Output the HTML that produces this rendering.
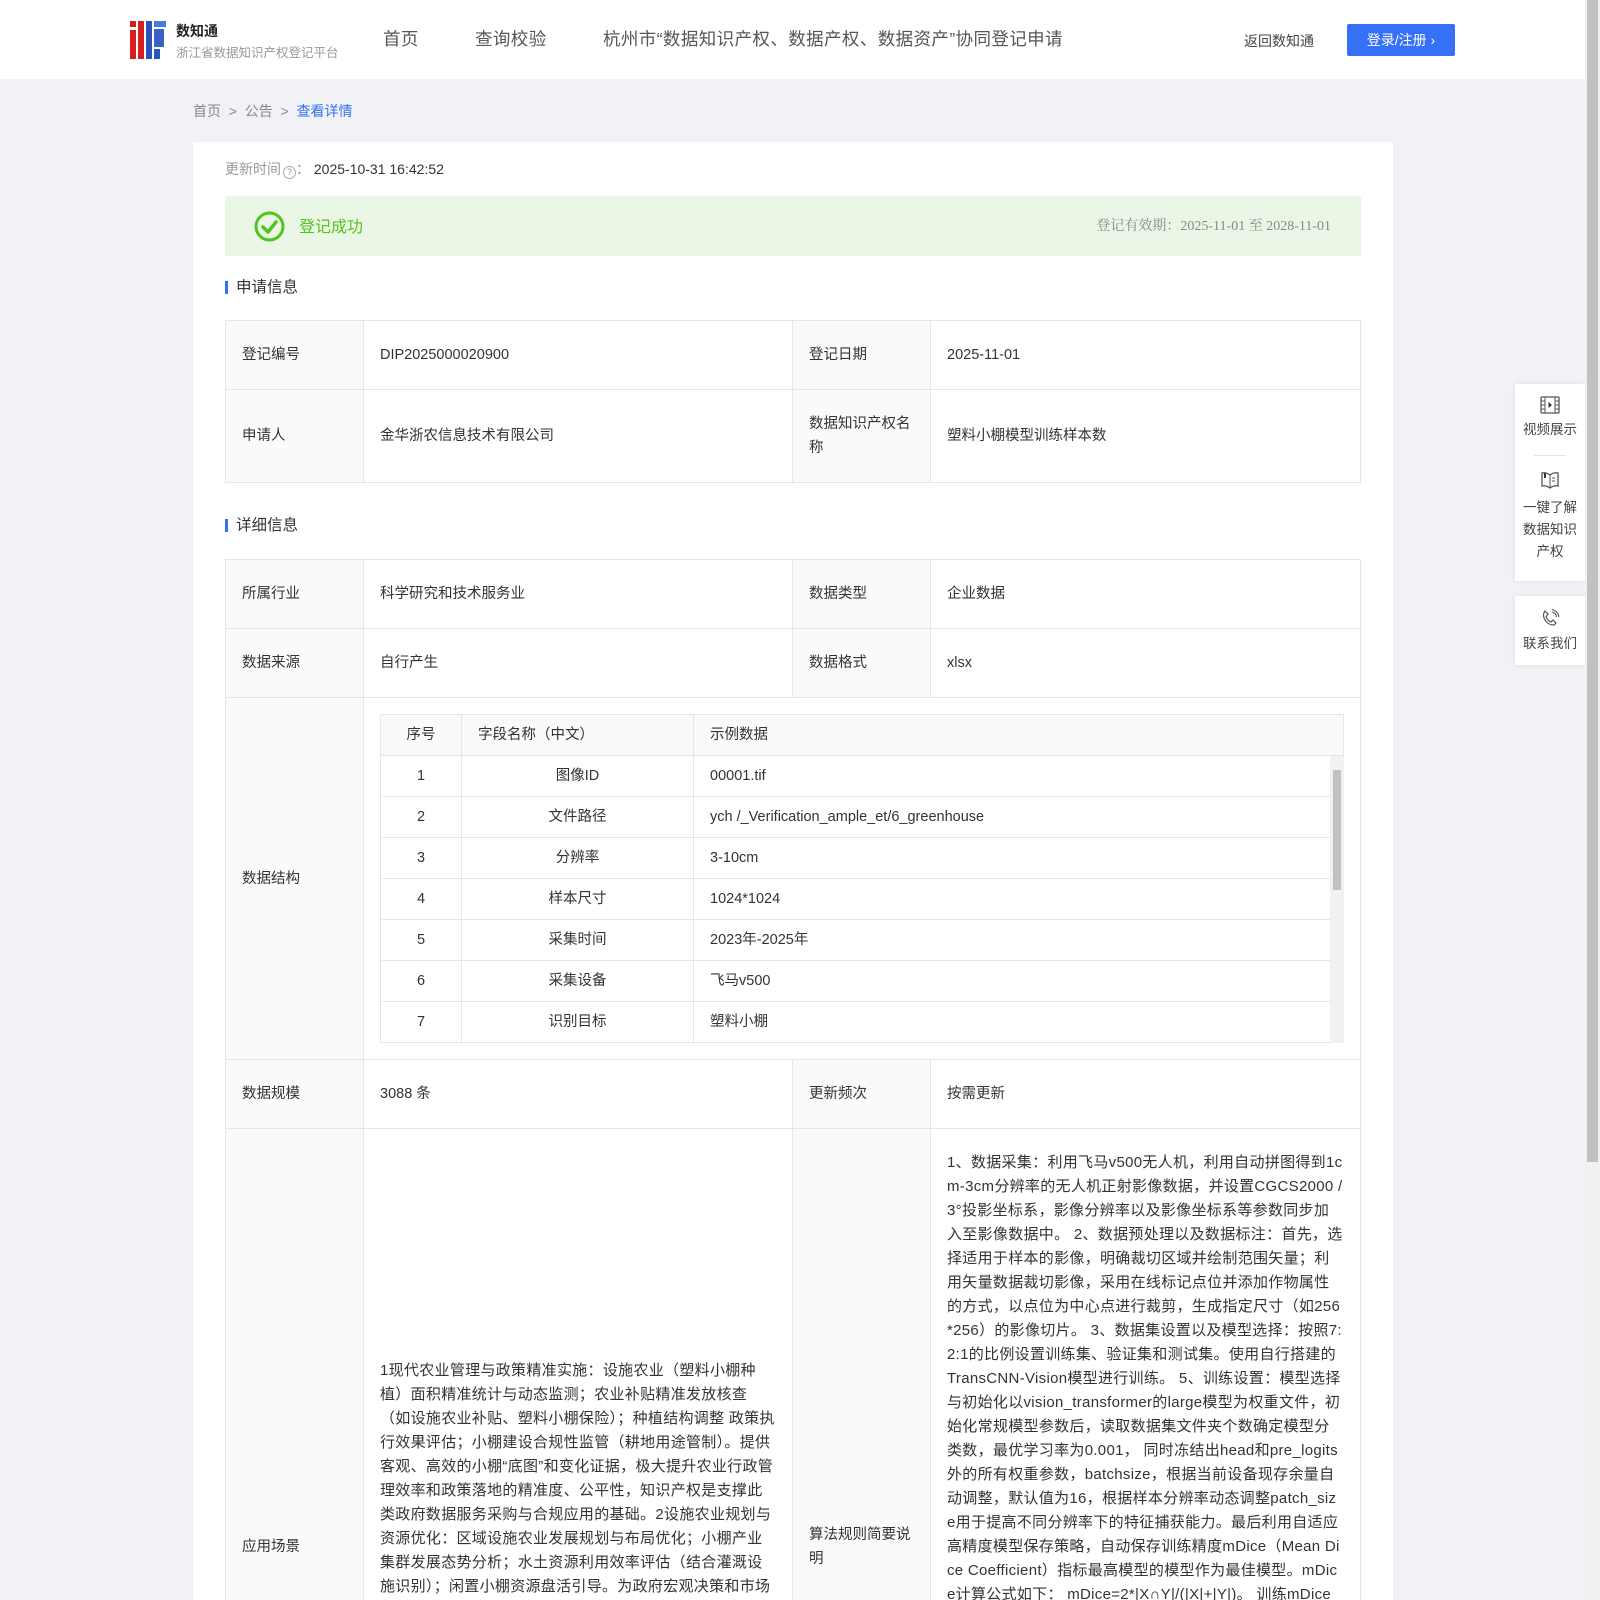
<!DOCTYPE html>
<html><head><meta charset="utf-8">
<style>
*{margin:0;padding:0;box-sizing:border-box}
html,body{width:1600px;height:1600px;overflow:hidden}
body{background:#f0f2f5;font-family:"Liberation Sans","Noto Sans CJK SC",sans-serif;color:#333;font-size:14px;position:relative}
.hdr{position:absolute;left:0;top:0;width:1585px;height:79px;background:#fff}
.logo{position:absolute;left:130px;top:21px}
.t1{position:absolute;left:176px;top:21px;font-size:14px;font-weight:bold;color:#222}
.t2{position:absolute;left:176px;top:42px;font-size:12.5px;color:#999}
.nav{position:absolute;top:26px;font-size:17.5px;color:#555;letter-spacing:0.4px}
.back{position:absolute;left:1244px;top:31px;font-size:14px;color:#444}
.login{position:absolute;left:1347px;top:24px;width:108px;height:32px;background:#3471f5;color:#fff;font-size:14px;line-height:32px;text-align:center;border-radius:2px}
.bc{position:absolute;left:193px;top:101px;font-size:14px;color:#888}
.bc b{font-weight:normal;color:#3471f5}
.card{position:absolute;left:193px;top:142px;width:1200px;height:1500px;background:#fff}
.abs{position:absolute}
.upd{left:32px;top:17px;color:#999;font-size:14px}
.upd span{color:#333}
.ok{left:32px;top:54px;width:1136px;height:60px;background:#ebf7e6}
.ok .tx{position:absolute;left:74px;top:17px;color:#52c41a;font-size:16px}
.ok .dt{position:absolute;right:30px;top:19px;color:#888;font-size:14px;font-family:"Liberation Serif","Noto Serif CJK SC",serif}
.sec{font-size:15.5px;color:#333;padding-left:8px;border-left:3px solid #3471f5;line-height:13px}
table.t{position:absolute;left:32px;width:1136px;border-collapse:collapse;table-layout:fixed}
table.t td{border:1px solid #e6e6e6;padding:0 16px;font-size:14.5px;color:#333;line-height:24px}
table.t td.l{background:#fafafa}
.inner{border-collapse:collapse;width:964px;table-layout:fixed}
.inner td{border:1px solid #e8e8e8;height:41px;font-size:13.5px;color:#555;padding:0 12px;line-height:20px}
.inner tr.h td{background:#fafafa}
table.t td.txt{word-break:break-all;font-size:15px;letter-spacing:0.3px;line-height:24px}
.side{position:absolute;left:1515px;width:70px;background:#fff;box-shadow:0 0 6px rgba(0,0,0,.08);text-align:center;font-size:13.5px;color:#444;line-height:22px}
.sb{position:absolute;left:1585px;top:0;width:15px;height:1600px;background:#f1f1f1}
.sb i{position:absolute;left:2px;top:0;width:11px;height:1162px;background:#c1c1c1}
</style></head><body>
<div class="hdr">
 <svg class="logo" width="36" height="38" viewBox="0 0 36 38">
  <rect x="0" y="0" width="6" height="6" fill="#d81e1e"/>
  <rect x="0" y="9" width="6" height="29" fill="#d81e1e"/>
  <rect x="8" y="0" width="6" height="38" fill="#d81e1e"/>
  <rect x="16" y="0" width="6" height="38" fill="#2a55b8"/>
  <rect x="24" y="0" width="12" height="6" fill="#4a78d6"/>
  <rect x="24" y="8" width="10" height="18" fill="#3a62c4"/>
  <rect x="24" y="28" width="6" height="10" fill="#2a55b8"/>
 </svg>
 <div class="t1">数知通</div>
 <div class="t2">浙江省数据知识产权登记平台</div>
 <div class="nav" style="left:383px">首页</div>
 <div class="nav" style="left:475px">查询校验</div>
 <div class="nav" style="left:603px">杭州市“数据知识产权、数据产权、数据资产”协同登记申请</div>
 <div class="back">返回数知通</div>
 <div class="login">登录/注册 ›</div>
</div>
<div class="bc">首页 &nbsp;&gt;&nbsp; 公告 &nbsp;&gt;&nbsp; <b>查看详情</b></div>
<div class="card">
 <div class="abs upd">更新时间<span style="display:inline-block;width:13px;height:13px;border:1px solid #aaa;border-radius:50%;font-size:9px;line-height:11px;text-align:center;color:#999;vertical-align:-1px;margin-left:2px">?</span>： <span>2025-10-31 16:42:52</span></div>
 <div class="abs ok">
  <svg style="position:absolute;left:29px;top:15px" width="31" height="31" viewBox="0 0 31 31"><circle cx="15.5" cy="15.5" r="13.5" fill="none" stroke="#52c41a" stroke-width="3"/><path d="M9 16 L14 21 L22 11" fill="none" stroke="#52c41a" stroke-width="3.5" stroke-linecap="round" stroke-linejoin="round"/></svg>
  <div class="tx">登记成功</div>
  <div class="dt">登记有效期：2025-11-01 至 2028-11-01</div>
 </div>
 <div class="abs sec" style="left:32px;top:139px">申请信息</div>
 <table class="t" style="top:178px">
  <colgroup><col style="width:138px"><col style="width:429px"><col style="width:138px"><col></colgroup>
  <tr style="height:69px"><td class="l">登记编号</td><td>DIP2025000020900</td><td class="l">登记日期</td><td>2025-11-01</td></tr>
  <tr style="height:93px"><td class="l">申请人</td><td>金华浙农信息技术有限公司</td><td class="l">数据知识产权名称</td><td>塑料小棚模型训练样本数</td></tr>
 </table>
 <div class="abs sec" style="left:32px;top:377px">详细信息</div>
 <table class="t" style="top:417px">
  <colgroup><col style="width:138px"><col style="width:429px"><col style="width:138px"><col></colgroup>
  <tr style="height:69px"><td class="l">所属行业</td><td>科学研究和技术服务业</td><td class="l">数据类型</td><td>企业数据</td></tr>
  <tr style="height:69px"><td class="l">数据来源</td><td>自行产生</td><td class="l">数据格式</td><td>xlsx</td></tr>
  <tr style="height:361px"><td class="l">数据结构</td><td colspan="3" style="padding:16px;vertical-align:top;position:relative">
   <table class="inner">
    <colgroup><col style="width:81px"><col style="width:232px"><col></colgroup>
    <tr class="h"><td style="text-align:center">序号</td><td>字段名称（中文）</td><td>示例数据</td></tr>
    <tr><td style="text-align:center">1</td><td style="text-align:center">图像ID</td><td>00001.tif</td></tr>
    <tr><td style="text-align:center">2</td><td style="text-align:center">文件路径</td><td>ych /_Verification_ample_et/6_greenhouse</td></tr>
    <tr><td style="text-align:center">3</td><td style="text-align:center">分辨率</td><td>3-10cm</td></tr>
    <tr><td style="text-align:center">4</td><td style="text-align:center">样本尺寸</td><td>1024*1024</td></tr>
    <tr><td style="text-align:center">5</td><td style="text-align:center">采集时间</td><td>2023年-2025年</td></tr>
    <tr><td style="text-align:center">6</td><td style="text-align:center">采集设备</td><td>飞马v500</td></tr>
    <tr><td style="text-align:center">7</td><td style="text-align:center">识别目标</td><td>塑料小棚</td></tr>
   </table>
   <div style="position:absolute;left:966px;top:58px;width:14px;height:287px;background:#f1f1f1"><div style="position:absolute;left:3px;top:14px;width:8px;height:120px;background:#c1c1c1"></div></div>
  </td></tr>
  <tr style="height:69px"><td class="l">数据规模</td><td>3088 条</td><td class="l">更新频次</td><td>按需更新</td></tr>
  <tr style="height:840px"><td class="l" style="vertical-align:top;padding-top:406px">应用场景</td><td class="txt" style="vertical-align:top;padding-top:230px">1现代农业管理与政策精准实施：设施农业（塑料小棚种植）面积精准统计与动态监测；农业补贴精准发放核查 （如设施农业补贴、塑料小棚保险）；种植结构调整 政策执行效果评估；小棚建设合规性监管（耕地用途管制）。提供客观、高效的小棚“底图”和变化证据，极大提升农业行政管理效率和政策落地的精准度、公平性，知识产权是支撑此类政府数据服务采购与合规应用的基础。2设施农业规划与资源优化：区域设施农业发展规划与布局优化；小棚产业集群发展态势分析；水土资源利用效率评估（结合灌溉设施识别）；闲置小棚资源盘活引导。为政府宏观决策和市场主体投资提供空间数据支撑，促进设施农业资源高效配置与产业结构优化升级，推动农业现代化发展进程。</td><td class="l" style="vertical-align:top;padding-top:394px">算法规则简要说明</td><td class="txt" style="vertical-align:top;padding-top:22px">1、数据采集：利用飞马v500无人机，利用自动拼图得到1cm-3cm分辨率的无人机正射影像数据，并设置CGCS2000 / 3°投影坐标系，影像分辨率以及影像坐标系等参数同步加入至影像数据中。 2、数据预处理以及数据标注：首先，选择适用于样本的影像，明确裁切区域并绘制范围矢量；利用矢量数据裁切影像，采用在线标记点位并添加作物属性的方式，以点位为中心点进行裁剪，生成指定尺寸（如256*256）的影像切片。 3、数据集设置以及模型选择：按照7:2:1的比例设置训练集、验证集和测试集。使用自行搭建的TransCNN-Vision模型进行训练。 5、训练设置：模型选择与初始化以vision_transformer的large模型为权重文件，初始化常规模型参数后，读取数据集文件夹个数确定模型分类数，最优学习率为0.001， 同时冻结出head和pre_logits外的所有权重参数，batchsize，根据当前设备现存余量自动调整，默认值为16，根据样本分辨率动态调整patch_size用于提高不同分辨率下的特征捕获能力。最后利用自适应高精度模型保存策略，自动保存训练精度mDice（Mean Dice Coefficient）指标最高模型的模型作为最佳模型。mDice计算公式如下： mDice=2*|X∩Y|/(|X|+|Y|)。 训练mDice指数基于对测试集的评估结果。</td></tr>
 </table>
</div>
<div class="side" style="top:384px;height:197px">
 <svg style="margin-top:12px" width="20" height="18" viewBox="0 0 20 18"><rect x="1" y="1" width="18" height="16" rx="1" fill="none" stroke="#555" stroke-width="1.3"/><path d="M5 1V17M15 1V17M1 5H5M1 9H5M1 13H5M15 5H19M15 9H19M15 13H19" stroke="#555" stroke-width="1"/><path d="M8.5 6L12 9L8.5 12Z" fill="#333"/></svg>
 <div style="margin-top:-2px">视频展示</div>
 <div style="width:32px;height:1px;background:#e5e5e5;margin:14px auto 14px"></div>
 <svg width="20" height="20" viewBox="0 0 20 20"><path d="M2 3 Q6 2 10 5 Q14 2 18 3 V16 Q14 15 10 18 Q6 15 2 16Z" fill="none" stroke="#555" stroke-width="1.3"/><path d="M10 5V18" stroke="#555"/><rect x="4" y="3" width="2" height="5" fill="#333"/><path d="M12 8H15M12 11H15" stroke="#555"/></svg>
 <div>一键了解<br>数据知识<br>产权</div>
</div>
<div class="side" style="top:596px;height:69px">
 <svg style="margin-top:12px" width="20" height="20" viewBox="0 0 20 20"><path d="M5 3 L8 6 L6 9 Q8 13 11 14 L13 12 L16 15 L14 17 Q8 17 5 12 Q2 7 5 3Z" fill="none" stroke="#555" stroke-width="1.2"/><path d="M12 4 Q16 5 16.5 9M12 1.5 Q18 3 19 9" fill="none" stroke="#555" stroke-width="1.1"/></svg>
 <div style="margin-top:-2px">联系我们</div>
</div>
<div class="sb"><i></i></div>
</body></html>
